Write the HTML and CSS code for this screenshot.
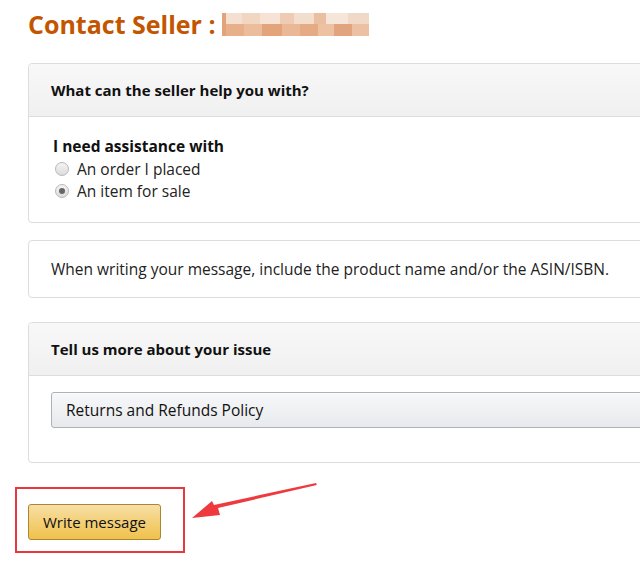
FILE: index.html
```html
<!DOCTYPE html>
<html>
<head>
<meta charset="utf-8">
<link rel="stylesheet" href="styles.css">
</head>
<body>
<div class="page">
  <h1 class="title">Contact Seller : <span class="blur"></span></h1>

  <section class="box">
    <div class="box-head">What can the seller help you with?</div>
    <div class="box-body options">
      <div class="label">I need assistance with</div>
      <div class="radio-row"><span class="radio"></span>An order I placed</div>
      <div class="radio-row"><span class="radio checked"></span>An item for sale</div>
    </div>
  </section>

  <section class="box note">
    When writing your message, include the product name and/or the ASIN/ISBN.
  </section>

  <section class="box issue">
    <div class="box-head">Tell us more about your issue</div>
    <div class="box-body select-body">
      <div class="select">Returns and Refunds Policy</div>
    </div>
  </section>

  <div class="action">
    <div class="highlight">
      <button class="btn">Write message</button>
    </div>
    <svg class="arrow" width="130" height="40" viewBox="0 0 130 40">
      <polygon points="124,0 124.8,2 26,25 28,32 0,35 20,18 22,22" fill="#ee3a3f"/>
    </svg>
  </div>
</div>
</body>
</html>
```
FILE: styles.css
```css
html, body {
  margin: 0;
  padding: 0;
  background: #fff;
  overflow: hidden;
}
.page {
  width: 640px;
  height: 572px;
  overflow: hidden;
  font-family: "Open Sans", Lato, sans-serif;
  color: #111;
  position: relative;
}
.title {
  margin: 8px 0 0 28px;
  font-size: 25px;
  line-height: 32px;
  font-weight: 700;
  color: #c45500;
  display: flex;
  align-items: center;
  white-space: nowrap;
}
.blur {
  display: inline-block;
  width: 147px;
  height: 23px;
  margin-left: 6px;
  background:
    linear-gradient(90deg, #e2a27a 0 4px, transparent 4px),
    linear-gradient(90deg, #f4dfd0 0 20px, #f1d6c2 20px 38px, #f6e3d6 38px 58px, #eecbb2 58px 72px, #f3ddcc 72px 92px, #e9bfa0 92px 104px, #f6e6da 104px 126px, #f1d9c7 126px 147px) top / 100% 11px no-repeat,
    linear-gradient(90deg, #e7b08b 0 22px, #ecbd9c 22px 40px, #e3a47c 40px 60px, #eab896 60px 78px, #e5ab84 78px 96px, #edc2a3 96px 112px, #e2a47e 112px 130px, #ecc0a2 130px 147px) bottom / 100% 12px no-repeat;
}
.box {
  margin: 23px 0 0 28px;
  width: 640px;
  border: 1px solid #ddd;
  border-radius: 4px;
  box-sizing: border-box;
  background: #fff;
}
.box-head {
  height: 52px;
  display: flex;
  align-items: center;
  padding-left: 22px;
  background: linear-gradient(#f8f8f8, #f0f0f0);
  border-bottom: 1px solid #ddd;
  border-radius: 4px 4px 0 0;
  font-size: 15px;
  font-weight: 700;
  color: #111;
}
.options {
  padding: 18px 0 19px 24px;
  font-size: 15.5px;
  line-height: 22.5px;
}
.label {
  font-weight: 700;
}
.radio-row {
  display: flex;
  align-items: center;
  gap: 8px;
  margin-left: 2px;
  color: #222;
}
.radio {
  width: 14px;
  height: 14px;
  border: 1px solid #b8b8b8;
  border-radius: 50%;
  background: linear-gradient(#f4f4f4, #dcdcdc);
  box-sizing: border-box;
  position: relative;
}
.radio.checked::after {
  content: "";
  position: absolute;
  left: 3px;
  top: 3px;
  width: 6px;
  height: 6px;
  border-radius: 50%;
  background: #666;
}
.note {
  margin-top: 17px;
  height: 58px;
  display: flex;
  align-items: center;
  padding-left: 22px;
  font-size: 15.5px;
  color: #222;
}
.issue {
  margin-top: 24px;
}
.select-body {
  padding: 16px 0 34px 22px;
}
.select {
  height: 36px;
  box-sizing: border-box;
  border: 1px solid #adb1b8;
  border-radius: 3px;
  background: linear-gradient(#f7f8fa, #e7e9ec);
  box-shadow: 0 1px 0 rgba(255,255,255,.6) inset;
  display: flex;
  align-items: center;
  padding-left: 14px;
  font-size: 15.5px;
  color: #111;
}
.action {
  position: relative;
  margin-top: 24px;
  height: 70px;
}
.highlight {
  margin-left: 15px;
  width: 170px;
  height: 66px;
  box-sizing: border-box;
  border: 2px solid #e8383d;
  padding: 15px 0 0 11px;
}
.btn {
  width: 133px;
  height: 36px;
  border: 1px solid #a88734;
  border-radius: 3px;
  background: linear-gradient(#f7dfa5, #f0c14b);
  font-family: inherit;
  font-size: 15px;
  color: #111;
  padding: 0;
}
.arrow {
  position: absolute;
  left: 192px;
  top: -4px;
}
```
